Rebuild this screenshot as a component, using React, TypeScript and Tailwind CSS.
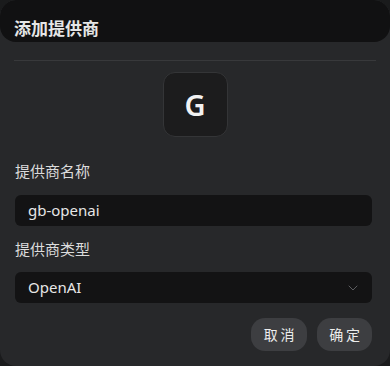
import { ChevronDown } from "lucide-react";

const font = { fontFamily: '"Noto Sans", "Noto Sans CJK SC", sans-serif' };

export default function App() {
  return (
    <div className="w-[390px] h-[366px] bg-[#1a1b1c]" style={font}>
      <div className="h-full rounded-2xl bg-[#27282a] overflow-hidden flex flex-col">
        {/* Header */}
        <div className="h-[42px] rounded-2xl bg-[#111112] px-[14px] pt-[19px]">
          <h2 className="text-[17px] leading-[20px] font-bold text-[#e6e6e6]">添加提供商</h2>
        </div>

        <div className="mt-[18px] mx-[14px] h-px bg-[#38393b]" />

        <div className="mt-[11px] flex justify-center">
          <div className="w-[65px] h-[65px] rounded-[12px] bg-[#1c1c1d] border border-[#343537] flex items-center justify-center">
            <span className="text-[29px] font-semibold text-[#f2f2f2] leading-none">G</span>
          </div>
        </div>

        <div className="pl-[15px] pr-[18px] flex flex-col">
          <label className="mt-[24px] text-[15px] leading-[20px] text-[#dcdcdc]">提供商名称</label>
          <div className="mt-[14px] h-[31px] rounded-[6px] bg-[#131314] flex items-center px-[13px]">
            <span className="text-[15px] text-[#e6e6e6]">gb-openai</span>
          </div>

          <label className="mt-[13px] text-[15px] leading-[20px] text-[#dcdcdc]">提供商类型</label>
          <div className="mt-[13px] h-[31px] rounded-[6px] bg-[#131314] flex items-center justify-between pl-[13px] pr-[11px]">
            <span className="text-[15px] text-[#e6e6e6]">OpenAI</span>
            <ChevronDown className="w-4 h-4 text-[#5c5d60]" strokeWidth={1.5} />
          </div>

          <div className="mt-[15px] flex justify-end gap-[10px]">
            <button className="w-[56px] h-[33px] rounded-[14px] bg-[#3d3e41] text-[14px] text-[#ececec] tracking-[0.2em] pl-[3px]">
              取消
            </button>
            <button className="w-[55px] h-[33px] rounded-[14px] bg-[#3d3e41] text-[14px] text-[#ececec] tracking-[0.2em] pl-[3px]">
              确定
            </button>
          </div>
        </div>
      </div>
    </div>
  );
}
